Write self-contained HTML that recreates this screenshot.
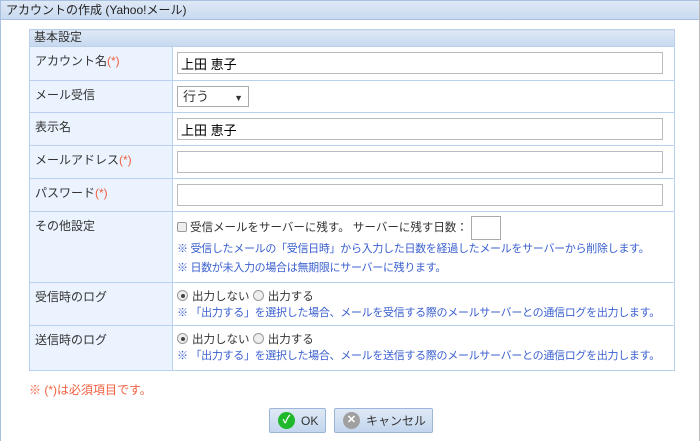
<!DOCTYPE html>
<html><head><meta charset="utf-8"><style>
*{box-sizing:border-box;margin:0;padding:0}
body{width:700px;height:441px;background:#fff;font-family:"Liberation Sans","Noto Sans CJK JP",sans-serif;font-size:12px;color:#333;position:relative;overflow:hidden}
.page{position:absolute;left:0;top:0;width:700px;height:441px;border-left:1px solid #a9c0e0;border-right:1px solid #bbb}
.title{height:20px;background:linear-gradient(#dfe9f6,#c9daf0);border-bottom:1px solid #a9c0e0;border-top:1px solid #a9c0e0;padding:2px 5px;font-size:12px;line-height:14px;color:#222}
table{position:absolute;left:28px;top:29px;width:645px;border-collapse:collapse;table-layout:fixed}
td{border:1px solid #b9d0ee;vertical-align:top;overflow:hidden}
.hd td{height:17px;background:linear-gradient(#dfe9f6,#c6d8ef);padding:0 4px;font-size:12px;line-height:15px}
td.l{background:#eaf3fe;padding:7px 5px;line-height:15px}
td.r{padding:5px 4px}
.req{color:#f06040}
input.t{display:block;width:486px;height:22px;border:1px solid #bbb;font-family:inherit;font-size:13px;padding:1px 3px}
.sel{width:72px;height:21px;border:1px solid #aaa;padding:2px 5px;font-size:13px;line-height:15px;position:relative}
.sel:after{content:"▼";position:absolute;right:5px;top:4px;font-size:9px}
.note{color:#3a5fcf;font-size:11px;letter-spacing:-0.3px;line-height:19px;white-space:nowrap}
.cb{display:inline-block;width:10px;height:10px;border:1px solid #999;background:#eee;border-radius:2px;vertical-align:-1px;margin-right:3px}
.rd{display:inline-block;width:11px;height:11px;border:1px solid #999;background:#eee;border-radius:50%;vertical-align:-1px;margin-right:4px;position:relative}
.rd.on:after{content:"";position:absolute;left:2.5px;top:2.5px;width:4px;height:4px;border-radius:50%;background:#444}
.day{display:inline-block;width:30px;height:24px;border:1px solid #aaa;vertical-align:middle}
.opt{font-size:11.5px;line-height:16px;white-space:nowrap}
.foot{position:absolute;left:28px;top:381px;color:#f06040;font-size:12px}
.btn{position:absolute;top:408px;height:25px;border:1px solid #9bb6d8;background:linear-gradient(#dfe9f6,#c3d6ee);border-radius:2px;font-size:12px;color:#333;padding-left:8px;display:flex;align-items:center}
.ic{display:inline-block;width:17px;height:17px;border-radius:50%;margin-right:6px;color:#fff;text-align:center;font-size:11px;line-height:17px;font-weight:bold}
</style></head><body><div class="page">
<div class="title">アカウントの作成 (Yahoo!メール)</div>
<table>
<colgroup><col style="width:143px"><col style="width:502px"></colgroup>
<tr class="hd"><td colspan="2">基本設定</td></tr>
<tr><td class="l" style="height:34px">アカウント名<span class="req">(*)</span></td><td class="r"><input class="t" value="上田 恵子"></td></tr>
<tr><td class="l" style="height:32px">メール受信</td><td class="r"><div class="sel">行う</div></td></tr>
<tr><td class="l" style="height:33px">表示名</td><td class="r"><input class="t" value="上田 恵子"></td></tr>
<tr><td class="l" style="height:33px">メールアドレス<span class="req">(*)</span></td><td class="r"><input class="t"></td></tr>
<tr><td class="l" style="height:33px">パスワード<span class="req">(*)</span></td><td class="r"><input class="t"></td></tr>
<tr><td class="l" style="height:71px">その他設定</td><td class="r" style="padding-top:4px;padding-bottom:0"><div class="opt" style="line-height:24px"><span class="cb"></span>受信メールをサーバーに残す。 サーバーに残す日数： <span class="day"></span></div><div class="note">※ 受信したメールの「受信日時」から入力した日数を経過したメールをサーバーから削除します。<br>※ 日数が未入力の場合は無期限にサーバーに残ります。</div></td></tr>
<tr><td class="l" style="height:43px">受信時のログ</td><td class="r" style="padding-top:6px;padding-bottom:0"><div class="opt"><span class="rd on"></span>出力しない <span class="rd"></span>出力する</div><div class="note" style="line-height:17px">※ 「出力する」を選択した場合、メールを受信する際のメールサーバーとの通信ログを出力します。</div></td></tr>
<tr><td class="l" style="height:45px">送信時のログ</td><td class="r" style="padding-top:6px;padding-bottom:0"><div class="opt"><span class="rd on"></span>出力しない <span class="rd"></span>出力する</div><div class="note" style="line-height:17px">※ 「出力する」を選択した場合、メールを送信する際のメールサーバーとの通信ログを出力します。</div></td></tr>
</table>
<div class="foot">※ (*)は必須項目です。</div>
<div class="btn" style="left:268px;width:57px"><span class="ic" style="background:#1fb82a">✓</span>OK</div>
<div class="btn" style="left:333px;width:99px"><span class="ic" style="background:#a0a0a0">✕</span>キャンセル</div>
</div></body></html>
